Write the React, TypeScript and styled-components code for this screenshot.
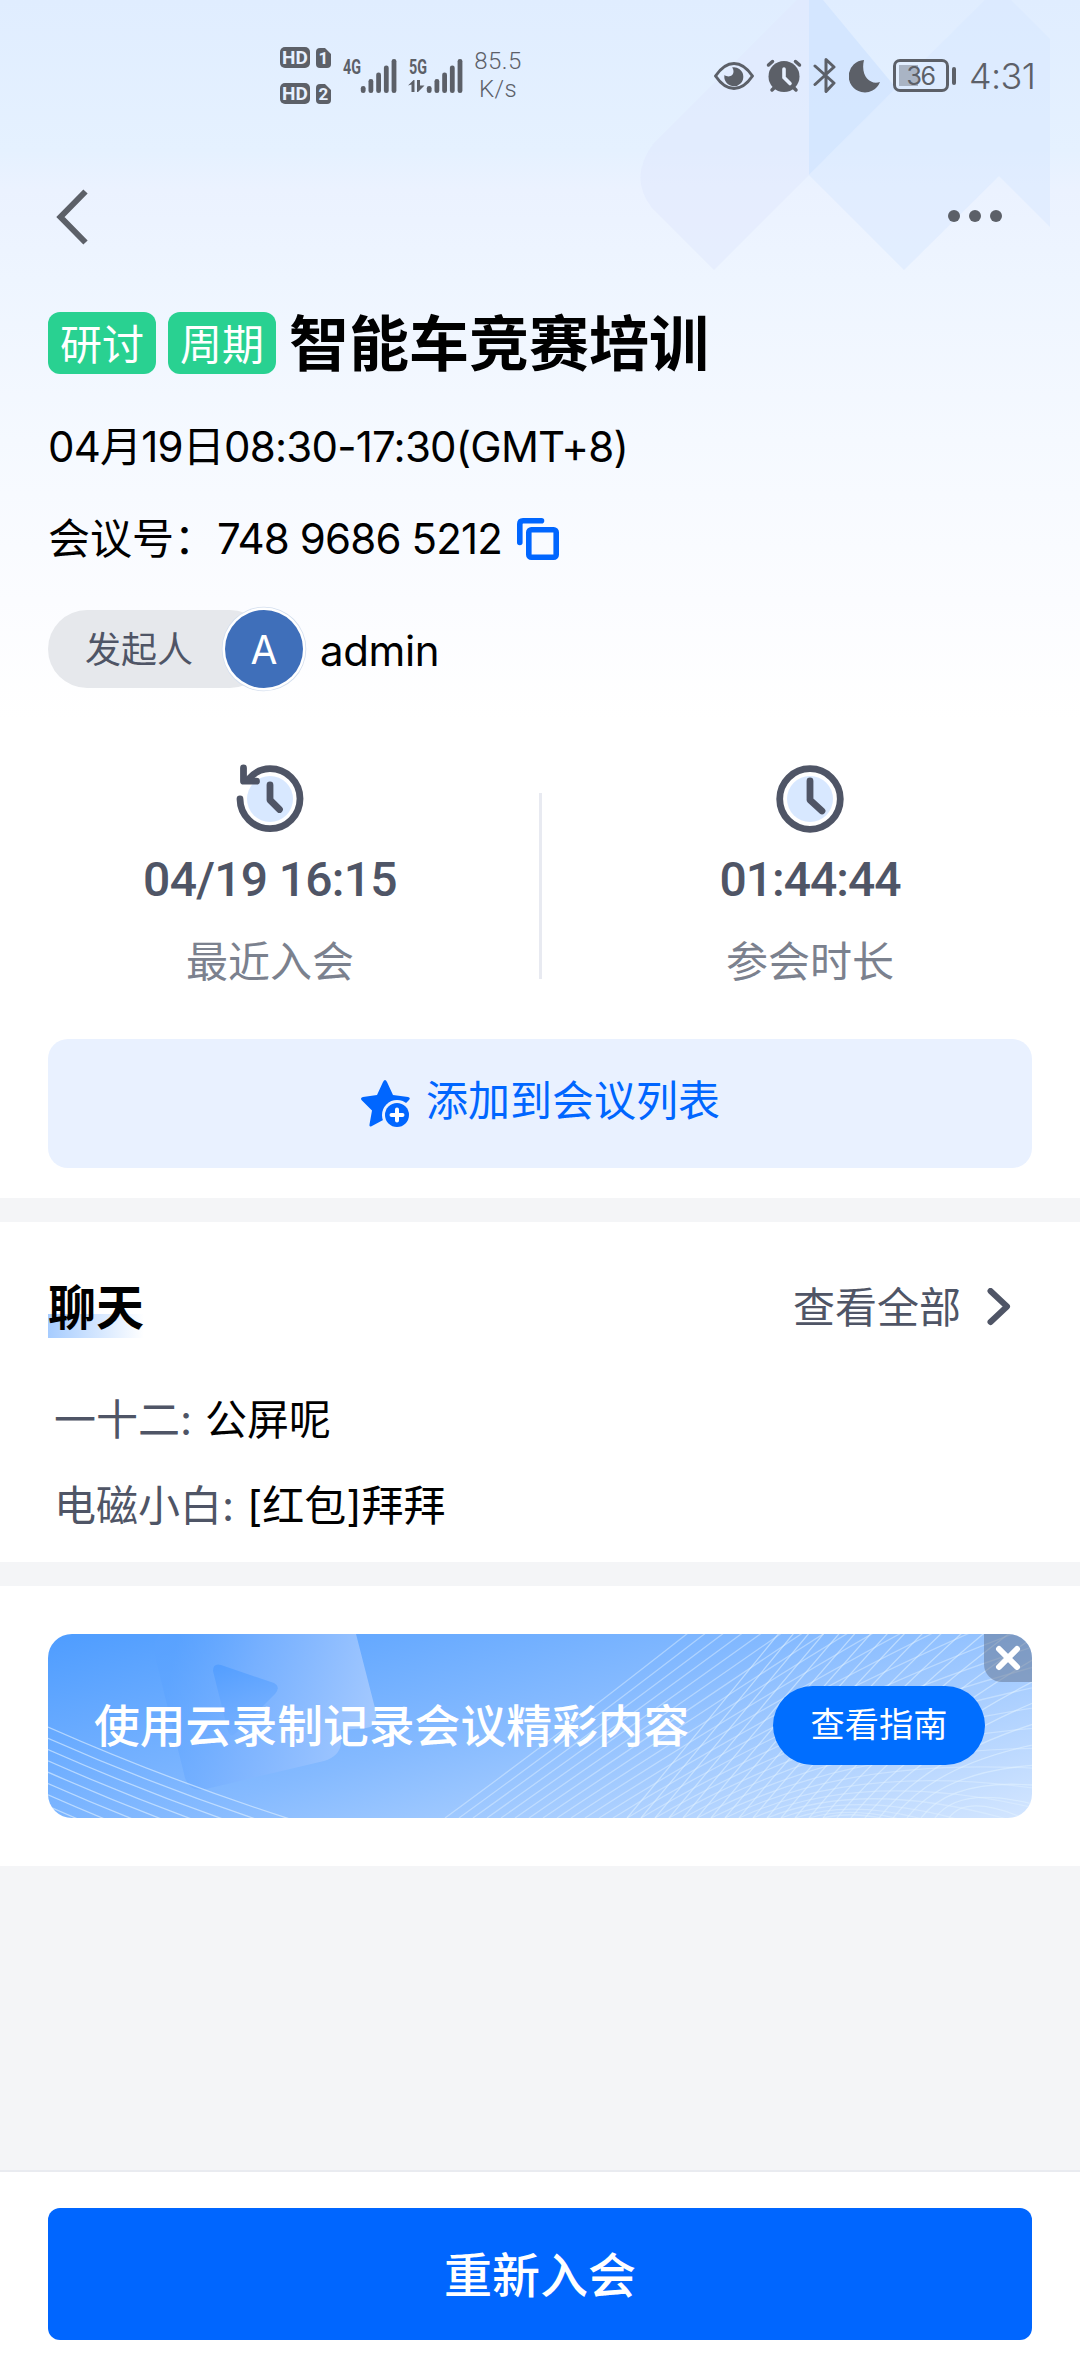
import React from 'react';
import styled, { createGlobalStyle } from 'styled-components';

const ink = '#5c6068';
const slate = '#4f5566';
const brand = '#0066ff';

const GlobalStyle = createGlobalStyle`
  * { box-sizing: border-box; }
  body {
    margin: 0;
    background: #fff;
    font-family: Inter, "Noto Sans CJK SC", sans-serif;
    color: #000;
  }
  svg { display: block; flex: none; }
`;

const Page = styled.div`
  display: flex;
  flex-direction: column;
  width: 1080px;
  height: 2376px;
  background: #f4f5f7;
  overflow: hidden;
`;

const Hero = styled.section`
  position: relative;
  display: flex;
  flex-direction: column;
  height: 1198px;
  background: linear-gradient(180deg, #e0edff 0, #e5f1ff 150px, #ebf2ff 190px, #eef5ff 280px, #f5f9ff 440px, #fbfcff 600px, #fff 720px);
`;

const HeroArt = styled.svg`
  position: absolute;
  top: 0;
  right: 0;
`;

const StatusBar = styled.div`
  position: relative;
  display: flex;
  align-items: center;
  height: 151px;
  padding: 0 45px 0 280px;
  color: ${ink};
`;

const SimStack = styled.div`
  display: flex;
  flex-direction: column;
  gap: 15px;
`;

const SimRow = styled.div`
  display: flex;
  align-items: center;
  gap: 6px;
`;

const HdBadge = styled.span`
  width: 30px;
  height: 21px;
  border-radius: 5px;
  background: ${ink};
  color: #e6f0ff;
  font: 700 19px/21px Roboto, sans-serif;
  text-align: center;
`;

const SimBadge = styled.span`
  width: 15px;
  height: 20px;
  border-radius: 4px;
  background: linear-gradient(225deg, transparent 4px, ${ink} 4.5px);
  color: #e6f0ff;
  font: 700 17px/20px Roboto, sans-serif;
  text-align: center;
`;

const Signal = styled.svg<{ $gap: number }>`
  margin-left: ${(p) => p.$gap}px;
`;

const Speed = styled.div`
  width: 60px;
  margin-left: 4px;
  font: 300 24px/27.5px Roboto, sans-serif;
  letter-spacing: 0.4px;
  text-align: center;
`;

const StatusIcons = styled.div`
  display: flex;
  align-items: center;
  margin-left: auto;
`;

const Gap = styled.span<{ $w: number }>`
  width: ${(p) => p.$w}px;
`;

const Battery = styled.div`
  display: flex;
  align-items: center;
  gap: 3px;
`;

const BatteryCell = styled.div`
  width: 56px;
  height: 33px;
  border: 3px solid ${ink};
  border-radius: 7px;
  background: linear-gradient(#a9b4c4, #a9b4c4) 3px 3px / 19px 21px no-repeat;
  font-size: 25px;
  font-weight: 400;
  line-height: 28px;
  text-align: center;
  padding-right: 1px;
  letter-spacing: -1.4px;
`;

const BatteryNub = styled.span`
  width: 4px;
  height: 18px;
  border-radius: 2px;
  background: ${ink};
`;

const Clock = styled.span`
  width: 66px;
  font-size: 36px;
  font-weight: 350;
  letter-spacing: -0.6px;
  line-height: 40px;
  white-space: nowrap;
`;

const NavBar = styled.nav`
  position: relative;
  display: flex;
  align-items: center;
  justify-content: space-between;
  height: 130px;
  padding: 0 78px 0 54px;
`;

const Details = styled.div`
  position: relative;
  display: flex;
  flex-direction: column;
  padding: 31px 48px 0;
`;

const TitleRow = styled.div`
  display: flex;
  align-items: center;
  gap: 12px;
  height: 62px;
`;

const Tag = styled.span`
  width: 108px;
  height: 62px;
  border-radius: 12px;
  background: #29d191;
  color: #fff;
  font-size: 42px;
  line-height: 66px;
  text-align: center;
`;

const Title = styled.h1`
  margin: 0 0 0 1px;
  font-size: 60px;
  font-weight: 700;
  line-height: 62px;
  padding-top: 2px;
  white-space: nowrap;
`;

const InfoLine = styled.div<{ $top: number; $track?: number }>`
  display: flex;
  align-items: center;
  height: 60px;
  margin-top: ${(p) => p.$top}px;
  font-size: 42px;
  line-height: 62px;
  letter-spacing: ${(p) => p.$track ?? 0}px;
  white-space: nowrap;
`;

const CopyIcon = styled.svg`
  margin-left: auto;
`;

const MeetingId = styled.div`
  display: flex;
  align-items: center;
  width: 511px;
`;

const MeetingNumber = styled.span`
  margin-left: 1px;
  letter-spacing: -0.85px;
`;

const Host = styled.div`
  display: flex;
  align-items: center;
  height: 78px;
  margin-top: 41px;
  font-size: 42px;
`;

const HostPill = styled.span`
  width: 221px;
  height: 78px;
  padding-left: 37px;
  border-radius: 39px;
  background: #e6e8ec;
  color: ${slate};
  font-size: 36px;
  line-height: 80px;
`;

const Avatar = styled.span`
  width: 78px;
  height: 78px;
  margin-left: -44px;
  border-radius: 50%;
  background: #3f6fba;
  box-shadow: 0 0 0 2.5px #fff, 0 0 0 3.3px #d3deee;
  color: #fff;
  font-size: 39px;
  line-height: 80px;
  text-align: center;
`;

const HostName = styled.span`
  margin: 4px 0 0 17px;
  line-height: 60px;
  letter-spacing: -0.4px;
`;

const Stats = styled.div`
  display: grid;
  grid-template-columns: 539px 3px 538px;
  margin-top: 74px;
  height: 229px;
`;

const Stat = styled.div<{ $l?: number; $r?: number }>`
  display: flex;
  flex-direction: column;
  align-items: center;
  padding: 0 ${(p) => p.$r ?? 0}px 0 ${(p) => p.$l ?? 0}px;
`;

const StatRule = styled.span`
  height: 186px;
  margin-top: 31px;
  background: #e8eaf1;
`;

const StatValue = styled.span<{ $track: number }>`
  margin-top: 14px;
  font: 500 48px/60px Roboto, sans-serif;
  letter-spacing: ${(p) => p.$track}px;
  color: ${slate};
`;

const StatLabel = styled.span`
  margin-top: 22px;
  font-size: 42px;
  line-height: 60px;
  color: #7b818e;
`;

const AddButton = styled.button`
  display: flex;
  align-items: center;
  justify-content: center;
  gap: 15px;
  width: 984px;
  height: 129px;
  margin: 48px 48px 0;
  padding: 0;
  border: 0;
  border-radius: 20px;
  background: #e9f1ff;
  color: ${brand};
  font: inherit;
  font-size: 42px;
`;

const AddLabel = styled.span`
  line-height: 60px;
  margin-top: -6px;
`;

const Chat = styled.section`
  height: 340px;
  margin-top: 24px;
  padding: 56px 48px 0;
  background: #fff;
`;

const ChatHead = styled.div`
  display: flex;
  justify-content: space-between;
  height: 60px;
`;

const ChatTitle = styled.h2`
  margin: 0;
  width: 96px;
  font-size: 48px;
  font-weight: 700;
  line-height: 60px;
  background: linear-gradient(90deg, #a6ccff, #fff) 0 36px / 96px 24px no-repeat;
`;

const SeeAll = styled.a`
  display: flex;
  align-items: center;
  gap: 24px;
  padding-right: 19px;
  color: ${slate};
  font-size: 42px;
  line-height: 60px;
`;

const Message = styled.p<{ $top: number }>`
  margin: ${(p) => p.$top}px 0 0 6px;
  font-size: 42px;
  line-height: 60px;
  white-space: pre;
`;

const Sender = styled.span`
  margin-right: 1px;
  color: ${slate};
`;

const Promo = styled.section`
  height: 280px;
  margin-top: 24px;
  padding: 48px;
  background: #fff;
`;

const Banner = styled.div`
  position: relative;
  display: flex;
  align-items: center;
  justify-content: space-between;
  height: 184px;
  padding: 0 47px 0 46px;
  border-radius: 24px;
  overflow: hidden;
`;

const BannerArt = styled.svg`
  position: absolute;
  inset: 0;
`;

const BannerText = styled.span`
  position: relative;
  padding-top: 2px;
  color: #fff;
  font-size: 45.8px;
  font-weight: 500;
  line-height: 60px;
`;

const GuideButton = styled.button`
  position: relative;
  width: 212px;
  height: 79px;
  margin-top: -1px;
  padding: 0 0 1px;
  border: 0;
  border-radius: 40px;
  background: #006eff;
  color: #fff;
  font: inherit;
  font-size: 34.2px;
  line-height: 78px;
`;

const CloseButton = styled.button`
  position: absolute;
  top: 0;
  right: 0;
  display: flex;
  align-items: center;
  justify-content: center;
  width: 48px;
  height: 48px;
  padding: 0;
  border: 0;
  border-radius: 0 0 0 18px;
  background: rgba(96, 112, 140, 0.5);
`;

const Footer = styled.footer`
  height: 206px;
  margin-top: auto;
  padding: 36px 48px 0;
  border-top: 2px solid #e9ebf0;
  background: #fff;
`;

const RejoinButton = styled.button`
  width: 984px;
  height: 132px;
  padding: 0;
  border: 0;
  border-radius: 12px;
  background: ${brand};
  color: #fff;
  font: inherit;
  font-size: 48px;
  font-weight: 500;
  line-height: 136px;
`;

const bars = [7, 14, 20.5, 27.5, 34];

function SignalBars({ label, gap, data }: { label: string; gap: number; data?: boolean }) {
  return (
    <Signal $gap={gap} width="56" height="52" viewBox="0 -8 56 52" fill={ink}>
      <text x="1" y="15.500" fontFamily="Roboto" fontWeight="700" fontSize="20" textLength="18" lengthAdjust="spacingAndGlyphs">
        {label}
      </text>
      {bars.map((h, i) => (
        <rect key={h} x={18.8 + i * 7.7} y={35 - h} width="4.8" height={h} rx="2.3" />
      ))}
      {data && <path d="M0 27.500 5.500 22h1v12H3.500v-7.500zM9 22h3v5.500h4.500L10 34H9z" />}
    </Signal>
  );
}

function HistoryIcon() {
  return (
    <svg width="74" height="74" viewBox="0 0 74 74" fill="none" stroke={slate} strokeWidth="6.8" strokeLinecap="round" strokeLinejoin="round">
      <circle cx="37" cy="37" r="23" fill="#d8e8ff" stroke="none" />
      <path d="M7 37a30 30 0 1 0 30-30.3c-9.500 0-16 4-22 11" />
      <path d="M10.500 6v13.200h13" />
      <path d="M37 23v15l9.500 9.500" />
    </svg>
  );
}

function ClockIcon() {
  return (
    <svg width="74" height="74" viewBox="0 0 74 74" fill="none" stroke={slate} strokeWidth="6.8" strokeLinecap="round" strokeLinejoin="round">
      <circle cx="37" cy="37" r="23" fill="#d8e8ff" stroke="none" />
      <circle cx="37" cy="37" r="30.300" />
      <path d="M37 19v19l12 11" />
    </svg>
  );
}

function BannerBackdrop() {
  const left = Array.from({ length: 9 }, (_, k) => {
    const y = 93 + k * 11.3;
    return `M0 ${y}Q120 ${y + 53} 245 ${y + 93}`;
  });
  const sweepA = Array.from({ length: 28 }, (_, k) => `M${397 + k * 14} 184Q${649 + k * 8} ${k * 6} 1012 ${-304 + k * 22}`);
  const sweepB = Array.from({ length: 24 }, (_, k) => `M${579 + k * 14} 184Q${739 + k * 8} ${-8 + k * 7} 1012 ${-350 + k * 24}`);
  return (
    <BannerArt width="984" height="184" viewBox="0 0 984 184">
      <defs>
        <linearGradient id="sky" gradientUnits="userSpaceOnUse" x1="150" y1="-90" x2="290" y2="400">
          <stop offset="0" stopColor="#4296ff" />
          <stop offset="0.5" stopColor="#85baff" />
          <stop offset="1" stopColor="#d9e9ff" />
        </linearGradient>
        <linearGradient id="cam" gradientUnits="userSpaceOnUse" x1="120" y1="50" x2="320" y2="90">
          <stop offset="0" stopColor="#5aa2ff" stopOpacity="0.5" />
          <stop offset="0.4" stopColor="#7db3ff" stopOpacity="0.75" />
          <stop offset="1" stopColor="#a6caff" stopOpacity="0.9" />
        </linearGradient>
        <linearGradient id="play" gradientUnits="userSpaceOnUse" x1="180" y1="30" x2="205" y2="105">
          <stop offset="0" stopColor="#559fff" />
          <stop offset="1" stopColor="#76b0ff" stopOpacity="0.6" />
        </linearGradient>
      </defs>
      <rect width="984" height="184" fill="url(#sky)" />
      <path d="M112 0Q104 8 107 22L137 144Q142 159 158 155L276 127Q292 122 293 109V96L318 94Q330 93 328 78L308 0Z" fill="url(#cam)" />
      <path d="M165 37Q165 29 173 31L226 49Q233 53 227 60L187 100Q182 104 180 97Z" fill="url(#play)" />
      <g fill="none" stroke="#e2f2ff" strokeWidth="1.300">
        <path d={left.join('')} opacity="0.6" />
        <path d={sweepA.join('')} opacity="0.45" />
        <path d={sweepB.join('')} opacity="0.55" />
      </g>
    </BannerArt>
  );
}

export default function App() {
  return (
    <Page>
      <GlobalStyle />
      <Hero>
        <HeroArt width="480" height="290" viewBox="0 0 480 290">
          <path d="M197 0H209V175L114 270L52 208Q28 177 54 143Z" fill="#dfe8fd" opacity="0.5" />
          <path d="M209 0H223L296 88L209 175Z" fill="#cfe2ff" opacity="0.7" />
          <path d="M385 0H411L450 39V227L399 176L304 270L209 175Z" fill="#d8e8ff" opacity="0.5" />
        </HeroArt>
        <StatusBar>
          <SimStack>
            <SimRow><HdBadge>HD</HdBadge><SimBadge>1</SimBadge></SimRow>
            <SimRow><HdBadge>HD</HdBadge><SimBadge>2</SimBadge></SimRow>
          </SimStack>
          <SignalBars label="4G" gap={11} />
          <SignalBars label="5G" gap={10} data />
          <Speed>85.5<br />K/s</Speed>
          <StatusIcons>
            <svg width="42" height="30" viewBox="0 0 42 30" fill="none" stroke={ink} strokeWidth="3">
              <path d="M2.500 15Q11 2.500 21 2.500T39.500 15Q31 27.500 21 27.500T2.500 15Z" strokeLinejoin="round" />
              <path d="M19 6.500A9.500 9.500 0 1 1 11.500 14c4 3 9 1 9-3.500 0-1.500-.5-3-1.500-4z" fill={ink} stroke="none" />
            </svg>
            <Gap $w={11} />
            <svg width="36" height="34" viewBox="0 0 36 34" fill="none" stroke={ink} strokeWidth="3.500" strokeLinecap="round">
              <circle cx="18" cy="17.500" r="15.500" fill={ink} stroke="none" />
              <path d="M2.500 6 6.500 2.500M33.500 6 29.500 2.500M6 31l3-3M30 31l-3-3" />
              <path d="M18 10v8.500l6 6" stroke="#e6f0ff" strokeWidth="3.600" />
            </svg>
            <Gap $w={11} />
            <svg width="24" height="37" viewBox="0 0 24 37" fill="none" stroke={ink} strokeWidth="3" strokeLinecap="round" strokeLinejoin="round">
              <path d="M2 9 21 26l-8 8.500V2.500L21 10 2 27.500" />
            </svg>
            <Gap $w={12} />
            <svg width="32" height="34" viewBox="0 0 32 34" fill={ink}>
              <path d="M15 1A16.200 16.200 0 1 0 31 23C22 26.500 11 18 15 1z" />
            </svg>
            <Gap $w={12} />
            <Battery><BatteryCell>36</BatteryCell><BatteryNub /></Battery>
            <Gap $w={13} />
            <Clock>4:31</Clock>
          </StatusIcons>
        </StatusBar>
        <NavBar>
          <svg width="36" height="60" viewBox="0 0 36 60" fill="none" stroke={ink} strokeWidth="6">
            <path d="M31.500 5.500 6.500 31l25 25.500" />
          </svg>
          <svg width="54" height="12" viewBox="0 0 54 12" fill={ink}>
            <circle cx="6" cy="6" r="6" /><circle cx="27" cy="6" r="6" /><circle cx="48" cy="6" r="6" />
          </svg>
        </NavBar>
        <Details>
          <TitleRow>
            <Tag>研讨</Tag>
            <Tag>周期</Tag>
            <Title>智能车竞赛培训</Title>
          </TitleRow>
          <InfoLine $top={43} $track={-0.78}>04月19日08:30-17:30(GMT+8)</InfoLine>
          <InfoLine $top={32}>
            <MeetingId>
              <span>会议号：</span>
              <MeetingNumber>748 9686 5212</MeetingNumber>
              <CopyIcon width="42" height="42" viewBox="0 0 42 42" fill="none" stroke={brand} strokeWidth="5.600">
                <rect x="11.800" y="11.800" width="27.400" height="27.400" rx="2.500" />
                <path d="M2.800 24.500V6Q2.800 2.800 6 2.800H24.500" strokeLinecap="round" />
              </CopyIcon>
            </MeetingId>
          </InfoLine>
          <Host>
            <HostPill>发起人</HostPill>
            <Avatar>A</Avatar>
            <HostName>admin</HostName>
          </Host>
        </Details>
        <Stats>
          <Stat $l={1}>
            <HistoryIcon />
            <StatValue $track={-0.7}>04/19 16:15</StatValue>
            <StatLabel>最近入会</StatLabel>
          </Stat>
          <StatRule />
          <Stat $r={2}>
            <ClockIcon />
            <StatValue $track={-1}>01:44:44</StatValue>
            <StatLabel>参会时长</StatLabel>
          </Stat>
        </Stats>
        <AddButton>
          <svg width="51" height="49" viewBox="0 0 51 49">
            <path d="M25 1Q26 1 27 3L33 16 48 18Q51 19 49 21L39 31 41 42 40 47 25 40 11 47.500Q9 48 9.500 45.500L12 31.500 1.500 21Q0 19 3 18L17 16 23 3Q24 1 25 1Z" fill={brand} />
            <circle cx="37" cy="36" r="15" fill="#e9f1ff" />
            <circle cx="37" cy="36" r="12" fill={brand} />
            <path d="M37 30.500v11M31.500 36h11" stroke="#fff" strokeWidth="4" strokeLinecap="round" />
          </svg>
          <AddLabel>添加到会议列表</AddLabel>
        </AddButton>
      </Hero>
      <Chat>
        <ChatHead>
          <ChatTitle>聊天</ChatTitle>
          <SeeAll>
            查看全部
            <svg width="28" height="40" viewBox="0 0 28 40" fill="none" stroke={slate} strokeWidth="6" strokeLinecap="round" strokeLinejoin="round">
              <path d="M5.500 3 22 18.500 5.500 34" />
            </svg>
          </SeeAll>
        </ChatHead>
        <Message $top={52}><Sender>一十二: </Sender>公屏呢</Message>
        <Message $top={26}><Sender>电磁小白: </Sender>[红包]拜拜</Message>
      </Chat>
      <Promo>
        <Banner>
          <BannerBackdrop />
          <BannerText>使用云录制记录会议精彩内容</BannerText>
          <GuideButton>查看指南</GuideButton>
          <CloseButton aria-label="关闭">
            <svg width="28" height="28" viewBox="0 0 28 28" stroke="#fff" strokeWidth="6" strokeLinecap="round">
              <path d="M5 5 23 23M23 5 5 23" />
            </svg>
          </CloseButton>
        </Banner>
      </Promo>
      <Footer>
        <RejoinButton>重新入会</RejoinButton>
      </Footer>
    </Page>
  );
}
